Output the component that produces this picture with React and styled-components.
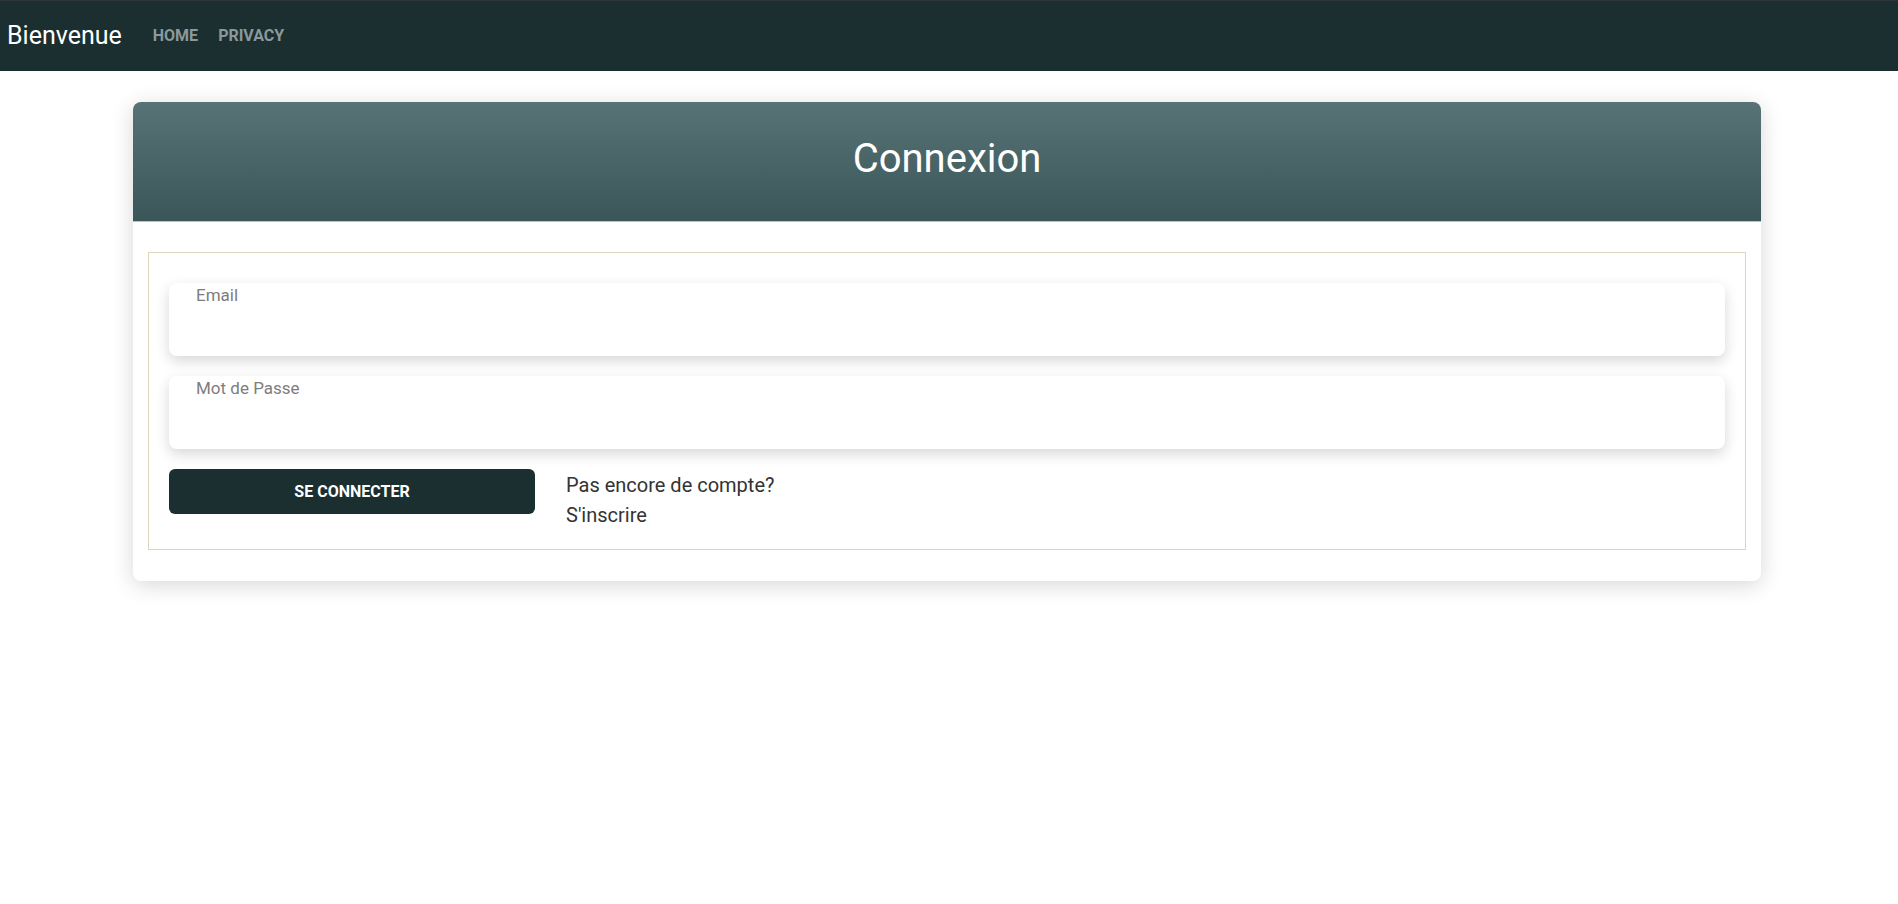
import React from "react";
import styled, { createGlobalStyle } from "styled-components";

const GlobalStyle = createGlobalStyle`
  body {
    margin: 0;
    background: #ffffff;
    font-family: Roboto, "Noto Sans", sans-serif;
  }
  * { box-sizing: border-box; }
`;

const NavBar = styled.nav`
  height: 71px;
  background: #1b2e30;
  border-top: 1px solid #2e3436;
  display: flex;
  align-items: center;
  padding: 0 0 2px 7px;
`;

const Brand = styled.a`
  color: #ffffff;
  font-size: 25px;
  text-decoration: none;
  margin-right: 31px;
`;

const NavLinks = styled.div`
  display: flex;
  gap: 20px;
`;

const NavLink = styled.a`
  color: #8a9a9c;
  font-size: 16px;
  font-weight: 700;
  text-decoration: none;
  text-transform: uppercase;
`;

const Main = styled.main`
  padding: 31px 0 40px 133px;
`;

const Card = styled.section`
  width: 1628px;
  background: #ffffff;
  border-radius: 8px;
  overflow: hidden;
  box-shadow: 0 4px 22px rgba(0, 0, 0, 0.16);
`;

const CardHeader = styled.header`
  height: 120px;
  padding-top: 33px;
  background: linear-gradient(180deg, #587375 0%, #3a5659 100%);
  border-bottom: 1px solid #b9c3c3;
  text-align: center;
`;

const Title = styled.h1`
  margin: 0;
  color: #ffffff;
  font-size: 40px;
  font-weight: 400;
  line-height: 47px;
`;

const CardBody = styled.div`
  padding: 30px 15px 31px;
`;

const Fieldset = styled.form`
  border: 1px solid #ddd5c0;
  padding: 30px 20px 19px;
  display: flex;
  flex-direction: column;
  gap: 20px;
`;

const Field = styled.div`
  position: relative;
  height: 73px;
  background: #ffffff;
  border-radius: 8px;
  box-shadow: 0 5px 14px rgba(0, 0, 0, 0.16);
`;

const FieldLabel = styled.label`
  position: absolute;
  top: 2px;
  left: 23px;
  padding: 0 4px;
  background: #ffffff;
  color: #7d7d7d;
  font-size: 17px;
  line-height: 20px;
`;

const FieldInput = styled.input`
  width: 100%;
  height: 100%;
  border: none;
  outline: none;
  background: transparent;
  padding: 26px 27px 0;
  font-family: inherit;
  font-size: 16px;
`;

const ActionRow = styled.div`
  display: flex;
  align-items: flex-start;
`;

const SubmitButton = styled.button`
  width: 366px;
  height: 45px;
  border: none;
  border-radius: 6px;
  background: #1b2e30;
  color: #ffffff;
  font-family: inherit;
  font-size: 16px;
  font-weight: 700;
  text-transform: uppercase;
  cursor: pointer;
`;

const SignupText = styled.div`
  margin: 1px 0 0 31px;
  color: #333333;
  font-size: 20px;
  line-height: 30px;
`;

const SignupLink = styled.a`
  display: block;
  color: #333333;
  text-decoration: none;
`;

const fields = [
  { name: "email", label: "Email", type: "email" },
  { name: "password", label: "Mot de Passe", type: "password" },
];

const App = () => {
  return (
    <>
      <GlobalStyle />
      <NavBar>
        <Brand href="#">Bienvenue</Brand>
        <NavLinks>
          <NavLink href="#">Home</NavLink>
          <NavLink href="#">Privacy</NavLink>
        </NavLinks>
      </NavBar>
      <Main>
        <Card>
          <CardHeader>
            <Title>Connexion</Title>
          </CardHeader>
          <CardBody>
            <Fieldset onSubmit={(e) => e.preventDefault()}>
              {fields.map((f) => (
                <Field key={f.name}>
                  <FieldLabel htmlFor={f.name}>{f.label}</FieldLabel>
                  <FieldInput id={f.name} type={f.type} />
                </Field>
              ))}
              <ActionRow>
                <SubmitButton type="submit">Se connecter</SubmitButton>
                <SignupText>
                  Pas encore de compte?
                  <SignupLink href="#">S'inscrire</SignupLink>
                </SignupText>
              </ActionRow>
            </Fieldset>
          </CardBody>
        </Card>
      </Main>
    </>
  );
};

export default App;
